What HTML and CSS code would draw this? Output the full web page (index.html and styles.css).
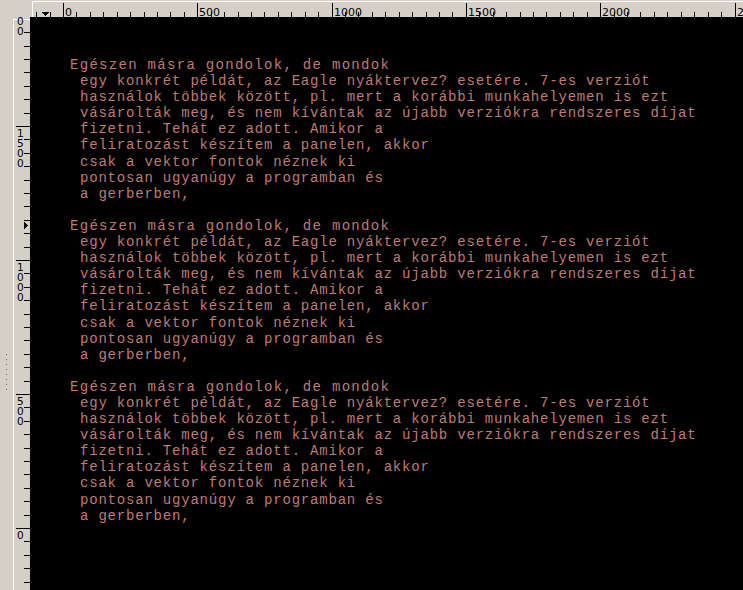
FILE: index.html
```html
<!DOCTYPE html>
<html lang="hu">
<head>
<meta charset="utf-8">
<title>Canvas</title>
<link rel="stylesheet" href="styles.css">
</head>
<body>
<div class="app">
  <div class="strip"><div class="grip"></div></div>
  <div class="corner"></div>
  <div class="hruler">
    <svg class="ruler-svg" width="713" height="17" viewBox="0 0 713 17">
      <path class="hl" d="M2 1.5H713M2.5 1V17"/>
      <path class="tick" d="M6.5 12V17M20.5 12V17M46.5 12V17M60.5 12V17M73.5 12V17M87.5 12V17M100.5 12V17M114.5 12V17M127.5 12V17M140.5 12V17M154.5 12V17M181.5 12V17M194.5 12V17M208.5 12V17M221.5 12V17M234.5 12V17M248.5 12V17M261.5 12V17M275.5 12V17M288.5 12V17M315.5 12V17M328.5 12V17M342.5 12V17M355.5 12V17M369.5 12V17M382.5 12V17M396.5 12V17M409.5 12V17M422.5 12V17M449.5 12V17M463.5 12V17M476.5 12V17M490.5 12V17M503.5 12V17M516.5 12V17M530.5 12V17M543.5 12V17M557.5 12V17M584.5 12V17M597.5 12V17M610.5 12V17M624.5 12V17M637.5 12V17M651.5 12V17M664.5 12V17M678.5 12V17M691.5 12V17"/>
      <path class="tick" d="M33.5 3V17M167.5 3V17M302.5 3V17M436.5 3V17M570.5 3V17M705.5 3V17"/>
      <text class="rl" x="35" y="15.5">0</text>
      <text class="rl" x="169" y="15.5">500</text>
      <text class="rl" x="304" y="15.5">1000</text>
      <text class="rl" x="438" y="15.5">1500</text>
      <text class="rl" x="572" y="15.5">2000</text>
      <text class="rl" x="707" y="15.5">2500</text>
      <polygon class="mark" points="12,12 19,12 15.5,16"/>
    </svg>
  </div>
  <div class="vruler">
    <svg class="ruler-svg" width="17" height="573" viewBox="0 0 17 573">
      <path class="hl" d="M0.5 2V573M0 2.5H17"/>
      <path class="tick" d="M11 15.5H17M11 29.5H17M11 42.5H17M11 55.5H17M11 69.5H17M11 82.5H17M11 96.5H17M11 122.5H17M11 136.5H17M11 149.5H17M11 163.5H17M11 176.5H17M11 189.5H17M11 203.5H17M11 216.5H17M11 230.5H17M11 256.5H17M11 270.5H17M11 283.5H17M11 297.5H17M11 310.5H17M11 323.5H17M11 337.5H17M11 350.5H17M11 364.5H17M11 390.5H17M11 404.5H17M11 417.5H17M11 431.5H17M11 444.5H17M11 457.5H17M11 471.5H17M11 484.5H17M11 498.5H17M11 524.5H17M11 538.5H17M11 551.5H17M11 565.5H17"/>
      <path class="tick" d="M3 109.5H17M3 243.5H17M3 377.5H17M3 511.5H17"/>
      <text class="rl rl-v" x="4" y="8">0</text>
      <text class="rl rl-v" x="4" y="18">0</text>
      <text class="rl rl-v" x="4" y="120">1</text>
      <text class="rl rl-v" x="4" y="130">5</text>
      <text class="rl rl-v" x="4" y="140">0</text>
      <text class="rl rl-v" x="4" y="150">0</text>
      <text class="rl rl-v" x="4" y="254">1</text>
      <text class="rl rl-v" x="4" y="264">0</text>
      <text class="rl rl-v" x="4" y="274">0</text>
      <text class="rl rl-v" x="4" y="284">0</text>
      <text class="rl rl-v" x="4" y="388">5</text>
      <text class="rl rl-v" x="4" y="398">0</text>
      <text class="rl rl-v" x="4" y="408">0</text>
      <text class="rl rl-v" x="4" y="522">0</text>
      <polygon class="mark" points="11,205 15,208.5 11,212"/>
    </svg>
  </div>
  <div class="canvas">
    <div class="block">
      <div class="line line-first">Egészen másra gondolok, de mondok</div>
      <div class="line">egy konkrét példát, az Eagle nyáktervez? esetére. 7-es verziót</div>
      <div class="line">használok többek között, pl. mert a korábbi munkahelyemen is ezt</div>
      <div class="line">vásárolták meg, és nem kívántak az újabb verziókra rendszeres díjat</div>
      <div class="line">fizetni. Tehát ez adott. Amikor a</div>
      <div class="line">feliratozást készítem a panelen, akkor</div>
      <div class="line">csak a vektor fontok néznek ki</div>
      <div class="line">pontosan ugyanúgy a programban és</div>
      <div class="line">a gerberben,</div>
    </div>
    <div class="block">
      <div class="line line-first">Egészen másra gondolok, de mondok</div>
      <div class="line">egy konkrét példát, az Eagle nyáktervez? esetére. 7-es verziót</div>
      <div class="line">használok többek között, pl. mert a korábbi munkahelyemen is ezt</div>
      <div class="line">vásárolták meg, és nem kívántak az újabb verziókra rendszeres díjat</div>
      <div class="line">fizetni. Tehát ez adott. Amikor a</div>
      <div class="line">feliratozást készítem a panelen, akkor</div>
      <div class="line">csak a vektor fontok néznek ki</div>
      <div class="line">pontosan ugyanúgy a programban és</div>
      <div class="line">a gerberben,</div>
    </div>
    <div class="block">
      <div class="line line-first">Egészen másra gondolok, de mondok</div>
      <div class="line">egy konkrét példát, az Eagle nyáktervez? esetére. 7-es verziót</div>
      <div class="line">használok többek között, pl. mert a korábbi munkahelyemen is ezt</div>
      <div class="line">vásárolták meg, és nem kívántak az újabb verziókra rendszeres díjat</div>
      <div class="line">fizetni. Tehát ez adott. Amikor a</div>
      <div class="line">feliratozást készítem a panelen, akkor</div>
      <div class="line">csak a vektor fontok néznek ki</div>
      <div class="line">pontosan ugyanúgy a programban és</div>
      <div class="line">a gerberben,</div>
    </div>
  </div>
</div>
</body>
</html>
```

FILE: styles.css
```css
html, body {
  margin: 0;
  padding: 0;
  background: #d4d0c8;
}

.app {
  display: grid;
  grid-template-columns: 13px 17px 1fr;
  grid-template-rows: 17px 1fr;
  width: 743px;
  height: 590px;
  overflow: hidden;
  background: #d4d0c8;
}

.strip {
  grid-row: 1 / 3;
  grid-column: 1;
  display: flex;
  flex-direction: column;
  align-items: flex-start;
}

.grip {
  margin: 354px 0 0 6px;
  width: 1px;
  height: 37px;
  background: repeating-linear-gradient(to bottom, #6e6c68 0 1px, transparent 1px 5px);
}

.corner {
  grid-row: 1;
  grid-column: 2;
}

.hruler {
  grid-row: 1;
  grid-column: 3;
  overflow: hidden;
}

.vruler {
  grid-row: 2;
  grid-column: 2;
  overflow: hidden;
}

.ruler-svg {
  display: block;
  shape-rendering: crispEdges;
}

.hl {
  stroke: #ffffff;
  stroke-width: 1;
  fill: none;
}

.tick {
  stroke: #000000;
  stroke-width: 1;
  fill: none;
}

.rl {
  font-family: "DejaVu Sans", sans-serif;
  font-size: 11px;
  fill: #000000;
}

.rl-v {
  font-size: 10.5px;
}

.mark {
  fill: #000000;
}

.canvas {
  grid-row: 2;
  grid-column: 3;
  background: #000000;
  padding: 40px 0 0 40px;
  font-family: "Liberation Mono", monospace;
  font-size: 14px;
  line-height: 16.1px;
  color: #bf7b77;
  overflow: hidden;
}

.block {
  margin-bottom: 16.1px;
}

.line {
  white-space: pre;
  letter-spacing: 0.8px;
  margin-left: 10px;
}

.line-first {
  margin-left: 0;
  letter-spacing: 1.3px;
}
```
